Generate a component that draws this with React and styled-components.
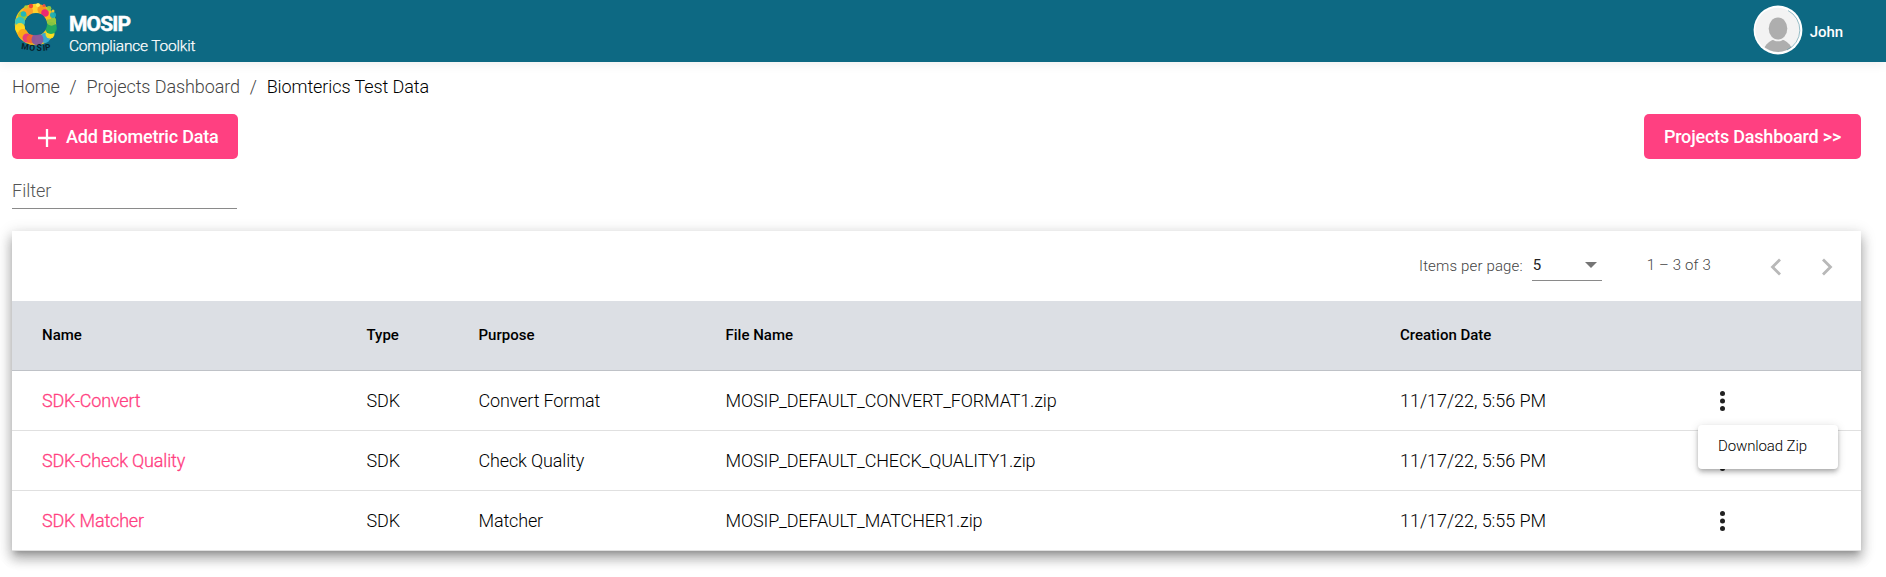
import React from "react";
import styled, { createGlobalStyle, css } from "styled-components";

const Global = createGlobalStyle`
  * { box-sizing: border-box; }
  body { margin: 0; background: #fff; font-family: Roboto, "Liberation Sans", sans-serif; color: rgba(0,0,0,.87); overflow: hidden; }
`;

const Page = styled.div`
  min-height: 577px;
`;
const Header = styled.header`
  height: 62px;
  padding: 0 43px 0 13px;
  display: flex;
  justify-content: space-between;
  background: #0d6983;
  color: #fff;
  box-shadow: 0 3px 10px rgba(0, 0, 0, 0.06);
`;
const Brand = styled.div`
  display: flex;
  gap: 11px;
`;
const BrandText = styled.div`
  padding-top: 12px;
`;
const BrandName = styled.div`
  font-size: 21px;
  line-height: 24px;
  font-weight: 700;
  letter-spacing: -0.85px;
  -webkit-text-stroke: 0.5px #fff;
`;
const BrandSub = styled.div`
  font-size: 15.5px;
  line-height: 20px;
  font-weight: 300;
  letter-spacing: -0.2px;
  -webkit-text-stroke: 0.25px #fff;
`;
const User = styled.div`
  display: flex;
  align-items: center;
  gap: 7px;
  height: 60px;
  font-size: 15px;
  font-weight: 500;
  letter-spacing: -0.1px;
  span { padding-top: 3px; }
`;
const Main = styled.main`
  padding: 0 25px 0 12px;
`;
const Crumbs = styled.nav`
  display: flex;
  height: 52px;
  line-height: 50px;
  font-size: 18px;
  font-weight: 300;
  letter-spacing: -0.09px;
  gap: 9.8px;
`;
const Crumb = styled.span`
  color: ${(p) => (p.$current ? "#000" : "#444")};
`;
const Actions = styled.div`
  display: flex;
  justify-content: space-between;
`;
const Button = styled.button`
  width: ${(p) => p.$width}px;
  height: 45px;
  padding: 0;
  border: 0;
  border-radius: 5px;
  background: #ff4081;
  color: #fff;
  font: 500 18px/45px Roboto, sans-serif;
  letter-spacing: -0.2px;
  display: flex;
  align-items: center;
  justify-content: center;
  gap: 10px;
  white-space: nowrap;
`;
const AddButton = styled(Button)`
  justify-content: flex-start;
  padding-left: 26px;
  svg { margin-top: 2px; }
`;
const Filter = styled.div`
  width: 225px;
  height: 50px;
  padding-top: 22px;
  border-bottom: 1px solid #8a8a8a;
  font-size: 18px;
  font-weight: 300;
  line-height: 20px;
  color: #555;
`;
const Card = styled.section`
  margin-top: 22px;
  background: #fff;
  box-shadow: 0 5px 5px -3px rgba(0, 0, 0, 0.2), 0 8px 10px 1px rgba(0, 0, 0, 0.14),
    0 3px 14px 2px rgba(0, 0, 0, 0.12), 0 7px 14px rgba(0, 0, 0, 0.12);
`;
const Paginator = styled.div`
  height: 70px;
  display: flex;
  justify-content: flex-end;
  align-items: center;
  padding-right: 22px;
  font-size: 15px;
  font-weight: 300;
  letter-spacing: 0.15px;
  color: #444;
`;
const PageSize = styled.div`
  width: 70px;
  height: 34px;
  margin: -4px 45px 0 9px;
  padding: 3px 5px 0 1px;
  display: flex;
  align-items: center;
  justify-content: space-between;
  border-bottom: 1px solid #8a8a8a;
  color: #222;
  font-weight: 400;
`;
const Range = styled.span`
  margin: -2px 53px 0 0;
`;
const Arrows = styled.div`
  display: flex;
  gap: 27px;
  padding-top: 2px;
`;
const Row = styled.div`
  display: grid;
  grid-template-columns: 324.5px 112px 247px 674.5px 314px 1fr;
  align-items: center;
  padding: 0 0 1px 30px;
  height: 60px;
  font-size: 18px;
  font-weight: 300;
  letter-spacing: -0.15px;
  color: #000;
  border-bottom: 1px solid #e0e0e0;
  ${(p) =>
    p.$head &&
    css`
      height: 70px;
      font-size: 15px;
      font-weight: 500;
      letter-spacing: 0;
      background: #dcdfe4;
      border-bottom-color: #bfc2c7;
    `}
`;
const NameLink = styled.span`
  color: #ff4081;
  letter-spacing: -0.17px;
  -webkit-text-stroke: 0.3px #ff4081;
`;
const DateText = styled.span`
  letter-spacing: -0.04px;
`;
const MenuCell = styled.div`
  position: relative;
  height: 23px;
`;
const Menu = styled.div`
  position: absolute;
  z-index: 2;
  left: -16px;
  top: 36px;
  width: 140px;
  height: 44px;
  padding-left: 20px;
  border-radius: 4px;
  background: #fff;
  color: #000;
  font-size: 15px;
  letter-spacing: -0.12px;
  line-height: 43px;
  box-shadow: 0 2px 4px -1px rgba(0, 0, 0, 0.2), 0 4px 5px rgba(0, 0, 0, 0.14),
    0 1px 10px rgba(0, 0, 0, 0.12);
`;

const LogoWord = styled.text`
  font: 700 8.5px Roboto, sans-serif;
  fill: #07222b;
`;

const dots = [
  [22, 9, 5, "#ffd22e"], [29, 9.5, 4.5, "#f7941d"], [15, 11, 5, "#ff9c2a"], [9.5, 16, 4.5, "#8dc63f"],
  [7, 22, 5, "#2cc4c9"], [7, 28, 5, "#ffd91f"], [10, 34, 5, "#f9a51a"], [14, 38, 4.5, "#e5357f"],
  [18, 39, 4.5, "#f7652b"], [32, 38, 5, "#2aa7dc"], [24.5, 39.5, 6, "#8455a4"], [37, 34, 4.5, "#ffe01e"],
  [38, 28, 6, "#12a664"], [38.5, 21, 4.7, "#8dc63f"], [35, 15, 4.5, "#ffb91d"], [32, 13, 3.8, "#ec1f79"],
  [40, 15, 3, "#19aebb"], [10.5, 14, 2.7, "#18b6c4"], [18, 6, 2.2, "#ef4136"], [36, 8.5, 2.4, "#9bcb3c"],
  [25, 5, 2, "#fff05b"], [13, 7, 1.8, "#b3d335"], [31, 5.5, 1.6, "#f04e4e"], [40, 11, 1.5, "#ffce2e"],
];

const Logo = () => (
  <svg width="45" height="54" viewBox="0 0 45 54">
    <circle cx="22.5" cy="24.5" r="16" fill="none" stroke="#f4c51f" strokeWidth="9.4" />
    {dots.map(([x, y, r, c], i) => (
      <circle key={i} cx={x} cy={y} r={r} fill={c} fillOpacity=".93" />
    ))}
    <circle cx="23" cy="24" r="11" fill="#0d6983" />
    <LogoWord x="8 16 23.5 30 32.5" y="49 50.5 51 51 50.5" rotate="8 5 0 -4 -8">MOSIP</LogoWord>
  </svg>
);

const Avatar = () => (
  <svg width="50" height="50" viewBox="0 0 50 50">
    <defs>
      <clipPath id="face"><circle cx="25" cy="25" r="22" /></clipPath>
    </defs>
    <circle cx="25" cy="25" r="24.4" fill="#fff" />
    <circle cx="24.5" cy="25" r="22.3" fill="#f3f3f3" />
    <g clipPath="url(#face)" fill="#aeaeae">
      <ellipse cx="25" cy="52" rx="16" ry="18" />
      <ellipse cx="25" cy="24" rx="10.3" ry="12.3" fill="#f3f3f3" />
      <ellipse cx="25" cy="23.5" rx="9.3" ry="11" />
    </g>
    <path d="M35 5.5A22 22 0 0 1 34 45" fill="none" stroke="#0d6983" strokeOpacity=".7" strokeWidth=".6" />
  </svg>
);

const Chevron = ({ d }) => (
  <svg width="24" height="24" viewBox="0 0 24 24">
    <path d={d} fill="none" stroke="#b8b8b8" strokeWidth="2.8" />
  </svg>
);

const Dots = () => (
  <svg width="17" height="24" viewBox="0 0 17 24">
    {[4.5, 12, 19.5].map((y) => (
      <circle key={y} cx="8.5" cy={y} r="2.5" fill="#212121" />
    ))}
  </svg>
);

const rows = [
  ["SDK-Convert", "Convert Format", "MOSIP_DEFAULT_CONVERT_FORMAT1.zip", "11/17/22, 5:56 PM"],
  ["SDK-Check Quality", "Check Quality", "MOSIP_DEFAULT_CHECK_QUALITY1.zip", "11/17/22, 5:56 PM"],
  ["SDK Matcher", "Matcher", "MOSIP_DEFAULT_MATCHER1.zip", "11/17/22, 5:55 PM"],
];

export default function App() {
  return (
    <Page>
      <Global />
      <Header>
        <Brand>
          <Logo />
          <BrandText>
            <BrandName>MOSIP</BrandName>
            <BrandSub>Compliance Toolkit</BrandSub>
          </BrandText>
        </Brand>
        <User>
          <Avatar />
          <span>John</span>
        </User>
      </Header>
      <Main>
        <Crumbs>
          <Crumb>Home</Crumb>
          <Crumb>/</Crumb>
          <Crumb>Projects Dashboard</Crumb>
          <Crumb>/</Crumb>
          <Crumb $current>Biomterics Test Data</Crumb>
        </Crumbs>
        <Actions>
          <AddButton $width={226}>
            <svg width="18" height="18" viewBox="0 0 18 18">
              <path d="M9 0v18M0 9h18" stroke="#fff" strokeWidth="2.3" />
            </svg>
            Add Biometric Data
          </AddButton>
          <Button $width={217}>Projects Dashboard &gt;&gt;</Button>
        </Actions>
        <Filter>Filter</Filter>
        <Card>
          <Paginator>
            <span>Items per page:</span>
            <PageSize>
              5
              <svg width="12" height="6" viewBox="0 0 12 6">
                <path d="M0 0h12L6 6z" fill="#757575" />
              </svg>
            </PageSize>
            <Range>1 – 3 of 3</Range>
            <Arrows>
              <Chevron d="M16 4.5 8.5 12 16 19.5" />
              <Chevron d="M8 4.5 15.5 12 8 19.5" />
            </Arrows>
          </Paginator>
          <Row $head>
            <span>Name</span>
            <span>Type</span>
            <span>Purpose</span>
            <span>File Name</span>
            <span>Creation Date</span>
          </Row>
          {rows.map(([name, purpose, file, date], i) => (
            <Row key={name}>
              <NameLink>{name}</NameLink>
              <span>SDK</span>
              <span>{purpose}</span>
              <span>{file}</span>
              <DateText>{date}</DateText>
              <MenuCell>
                <Dots />
                {i === 0 && <Menu>Download Zip</Menu>}
              </MenuCell>
            </Row>
          ))}
        </Card>
      </Main>
    </Page>
  );
}
